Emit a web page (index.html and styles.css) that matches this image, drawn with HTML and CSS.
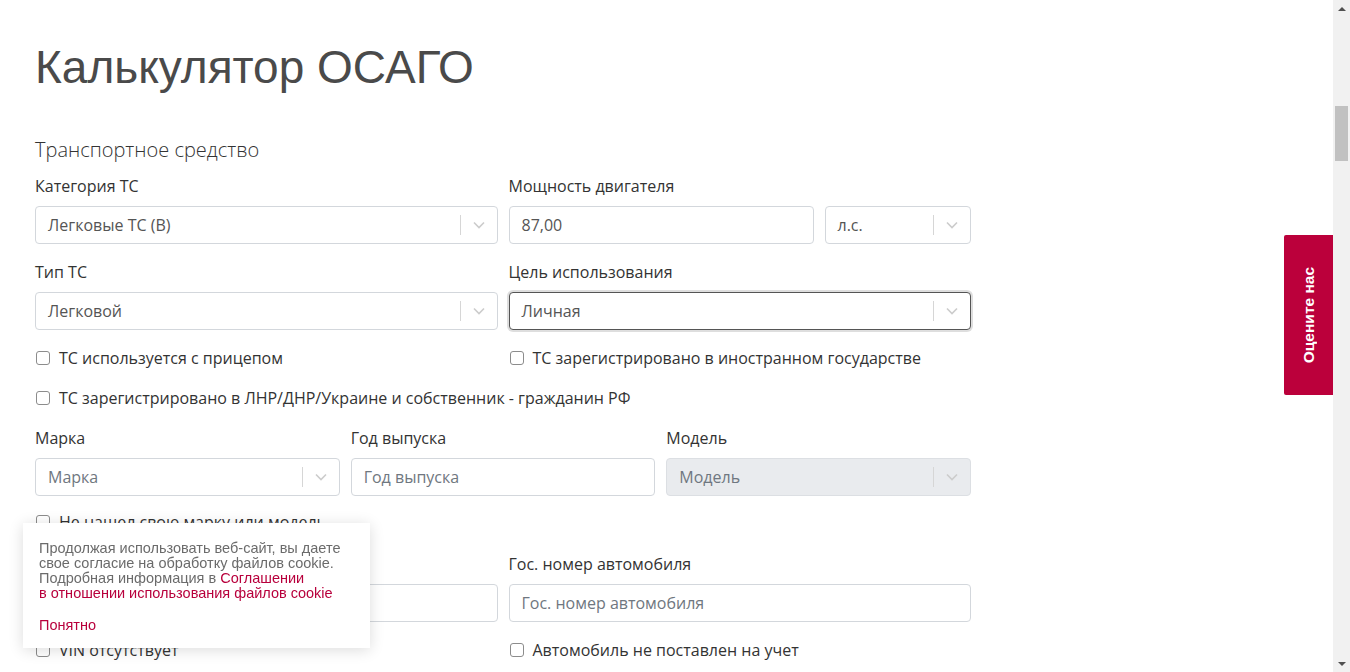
FILE: index.html
```html
<!DOCTYPE html>
<html lang="ru">
<head>
<meta charset="utf-8">
<title>Калькулятор ОСАГО</title>
<link rel="stylesheet" href="styles.css">
</head>
<body>
<main class="page">
  <h1 class="title">Калькулятор ОСАГО</h1>
  <h2 class="subtitle">Транспортное средство</h2>

  <div class="row two">
    <div class="group">
      <label class="label">Категория ТС</label>
      <div class="select"><span class="value">Легковые ТС (В)</span><span class="ind"><i class="sep"></i><svg class="chev" viewBox="0 0 12 8" width="12" height="8"><path d="M1 1.5 L6 6.5 L11 1.5" fill="none" stroke="#cccccc" stroke-width="1.6"/></svg></span></div>
    </div>
    <div class="group">
      <label class="label">Мощность двигателя</label>
      <div class="power">
        <div class="input"><span class="value">87,00</span></div>
        <div class="select"><span class="value">л.с.</span><span class="ind"><i class="sep"></i><svg class="chev" viewBox="0 0 12 8" width="12" height="8"><path d="M1 1.5 L6 6.5 L11 1.5" fill="none" stroke="#cccccc" stroke-width="1.6"/></svg></span></div>
      </div>
    </div>
  </div>

  <div class="row two gap-top">
    <div class="group">
      <label class="label">Тип ТС</label>
      <div class="select"><span class="value">Легковой</span><span class="ind"><i class="sep"></i><svg class="chev" viewBox="0 0 12 8" width="12" height="8"><path d="M1 1.5 L6 6.5 L11 1.5" fill="none" stroke="#cccccc" stroke-width="1.6"/></svg></span></div>
    </div>
    <div class="group">
      <label class="label">Цель использования</label>
      <div class="select focused"><span class="value">Личная</span><span class="ind"><i class="sep"></i><svg class="chev" viewBox="0 0 12 8" width="12" height="8"><path d="M1 1.5 L6 6.5 L11 1.5" fill="none" stroke="#cccccc" stroke-width="1.6"/></svg></span></div>
    </div>
  </div>

  <div class="row two checks first">
    <div class="check"><span class="box"></span>ТС используется с прицепом</div>
    <div class="check"><span class="box"></span>ТС зарегистрировано в иностранном государстве</div>
  </div>
  <div class="row checks next">
    <div class="check"><span class="box"></span>ТС зарегистрировано в ЛНР/ДНР/Украине и собственник - гражданин РФ</div>
  </div>

  <div class="row three after-check">
    <div class="group">
      <label class="label">Марка</label>
      <div class="select"><span class="value ph">Марка</span><span class="ind"><i class="sep"></i><svg class="chev" viewBox="0 0 12 8" width="12" height="8"><path d="M1 1.5 L6 6.5 L11 1.5" fill="none" stroke="#cccccc" stroke-width="1.6"/></svg></span></div>
    </div>
    <div class="group">
      <label class="label">Год выпуска</label>
      <div class="input"><span class="value ph">Год выпуска</span></div>
    </div>
    <div class="group">
      <label class="label">Модель</label>
      <div class="select disabled"><span class="value ph">Модель</span><span class="ind"><i class="sep"></i><svg class="chev" viewBox="0 0 12 8" width="12" height="8"><path d="M1 1.5 L6 6.5 L11 1.5" fill="none" stroke="#cccccc" stroke-width="1.6"/></svg></span></div>
    </div>
  </div>

  <div class="row checks brand">
    <div class="check"><span class="box"></span>Не нашел свою марку или модель</div>
  </div>

  <div class="row two after-brand">
    <div class="group">
      <label class="label">VIN</label>
      <div class="input"><span class="value ph">VIN</span></div>
    </div>
    <div class="group">
      <label class="label">Гос. номер автомобиля</label>
      <div class="input"><span class="value ph">Гос. номер автомобиля</span></div>
    </div>
  </div>

  <div class="row two checks first">
    <div class="check"><span class="box"></span>VIN отсутствует</div>
    <div class="check"><span class="box"></span>Автомобиль не поставлен на учет</div>
  </div>
</main>

<div class="cookie">
  <p class="cookie-text">Продолжая использовать веб-сайт, вы даете<br>свое согласие на обработку файлов cookie.<br>Подробная информация в <a class="cookie-link" href="#">Соглашении<br>в отношении использования файлов cookie</a></p>
  <a class="cookie-ok" href="#">Понятно</a>
</div>

<div class="rate"><span class="rate-text">Оцените нас</span></div>

<div class="scrollbar">
  <span class="arrow up"></span>
  <span class="track"><span class="thumb"></span></span>
  <span class="arrow down"></span>
</div>
</body>
</html>
```

FILE: styles.css
```css
* { box-sizing: border-box; }
html, body { margin: 0; padding: 0; height: 100%; overflow: hidden; background: #fff; }
body { font-family: "Open Sans", "Liberation Sans", sans-serif; color: #333; font-size: 16px; }

.page { width: 936px; margin-left: 35px; }

.title {
  margin: 40px 0 0; font-family: "Liberation Sans", Arial, sans-serif; font-weight: 400;
  font-size: 46px; line-height: 54px; color: #4a4a4a; letter-spacing: 0;
}
.subtitle {
  margin: 44px 0 0; font-weight: 300; font-size: 20px; line-height: 24px; color: #333;
}

.row { display: grid; column-gap: 11px; }
.row.two { grid-template-columns: 1fr 1fr; margin-top: 14px; }
.row.two.gap-top { margin-top: 18px; }
.row.three { grid-template-columns: 1fr 1fr 1fr; }

.group { display: flex; flex-direction: column; }
.label { font-size: 16px; line-height: 20px; color: #333; margin-bottom: 10px; }

.power { display: grid; grid-template-columns: 305px 1fr; column-gap: 11px; }

.select, .input {
  height: 38px; border: 1px solid #d3d7dc; border-radius: 4px; background: #fff;
  display: flex; align-items: center;
}
.value { flex: 1; padding-left: 12px; font-size: 16px; color: #555; white-space: nowrap; overflow: hidden; }
.value.ph { color: #6f7780; }
.ind { display: flex; align-items: center; height: 100%; }
.sep { width: 1px; height: 20px; background: #d6d6d6; }
.chev { margin: 0 12px 0 12px; display: block; }

.select.focused { border-color: #555; box-shadow: 0 0 0 2px rgba(0,0,0,0.13); }
.select.disabled { background: #e9ebee; border-color: #dcdfe3; }

.checks { font-size: 16px; line-height: 20px; color: #333; }
.row.checks.first { margin-top: 18px; }
.row.checks.next { margin-top: 20px; }
.row.checks.brand { margin-top: 16px; }
.row.three.after-check { margin-top: 20px; }
.row.two.after-brand { margin-top: 22px; }

.check { display: flex; align-items: center; white-space: nowrap; }
.box {
  width: 14px; height: 14px; border: 1px solid #8c8c8c; border-radius: 3px;
  margin: 0 9px 0 1px; background: #fff; flex: none;
}

.cookie {
  position: fixed; left: 23px; top: 523px; width: 347px; height: 125px;
  background: #fff; box-shadow: 0 2px 14px rgba(0,0,0,0.14);
  padding: 18px 16px 0 16px;
  font-family: "Liberation Sans", Arial, sans-serif; font-size: 14.5px; line-height: 15px;
}
.cookie-text { margin: 0; color: #6b6b6b; }
.cookie-link { color: #b8003c; text-decoration: none; }
.cookie-ok { display: block; margin-top: 17px; color: #b8003c; text-decoration: none; }

.rate {
  position: fixed; left: 1284px; top: 235px; width: 49px; height: 160px;
  background: #bb003b; border-radius: 2px 0 0 2px;
  display: flex; align-items: center; justify-content: center;
}
.rate-text {
  writing-mode: vertical-rl; transform: rotate(180deg);
  font-family: "Liberation Sans", Arial, sans-serif; font-weight: 700; font-size: 15.5px; color: #fff;
}

.scrollbar {
  position: fixed; right: 0; top: 0; width: 17px; height: 672px; background: #f1f1f1;
  display: flex; flex-direction: column; align-items: center;
}
.arrow { width: 0; height: 0; flex: none; margin: 0 auto; }
.arrow.up { border-left: 4px solid transparent; border-right: 4px solid transparent; border-bottom: 4px solid #505050; margin-top: 7px; margin-bottom: 6px; }
.arrow.down { border-left: 4px solid transparent; border-right: 4px solid transparent; border-top: 4px solid #505050; margin-top: 6px; margin-bottom: 6px; }
.track { flex: 1; width: 100%; display: flex; justify-content: center; }
.thumb { width: 13px; height: 55px; margin-top: 89px; background: #c1c1c1; }
```
